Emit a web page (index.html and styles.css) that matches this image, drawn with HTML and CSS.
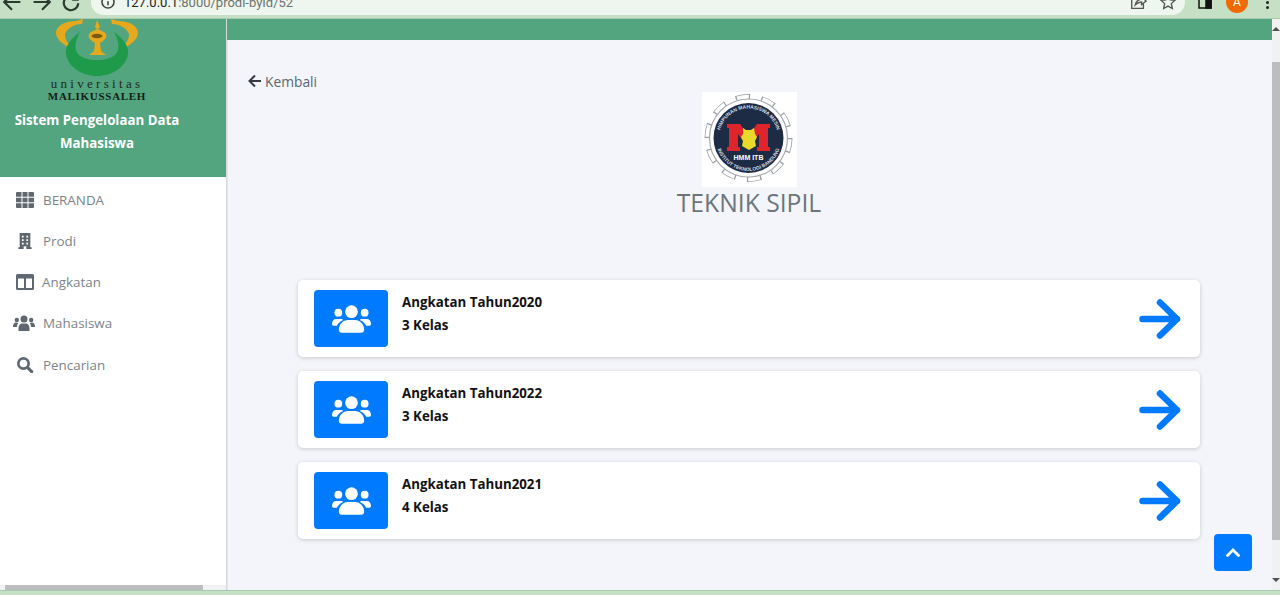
FILE: index.html
```html
<!DOCTYPE html>
<html lang="en">
<head>
    <meta charset="UTF-8">
    <meta name="viewport" content="width=device-width, initial-scale=1.0">
    <title>Sistem Pengelolaan Data Mahasiswa</title>
    <link rel="stylesheet" href="styles.css">
</head>
<body>
    <div class="browser-bar">
        <div class="browser-nav">
            <svg class="browser-icon" viewBox="0 0 20 20"><path d="M17 10H4M10 3.500L3.500 10l6.500 6.500"/></svg>
            <svg class="browser-icon" viewBox="0 0 20 20"><path d="M3 10h13M10 3.500l6.500 6.500-6.500 6.500"/></svg>
            <svg class="browser-icon" viewBox="0 0 20 20"><path d="M15 7.500A6 6 0 1 0 16 11M15.500 3.500V8H11"/></svg>
        </div>
        <div class="address-bar">
            <svg class="info-icon" viewBox="0 0 20 20"><circle cx="10" cy="10" r="7.500"/><path d="M10 9v5M10 6v1.500"/></svg>
            <span class="url"><span class="url-host">127.0.0.1</span>:8000/prodi-byId/52</span>
            <svg class="address-icon" viewBox="0 0 20 20"><path d="M9 4H3v13h13v-5M7 13c1-4 4-6 7-6V4l5 5-5 4v-3c-3 0-5 1-7 3z"/></svg>
            <svg class="address-icon" viewBox="0 0 20 20"><path d="M10 2.500l2.300 5 5.400.6-4 3.700 1.100 5.400-4.800-2.700-4.800 2.700 1.100-5.400-4-3.700 5.400-.6z"/></svg>
        </div>
        <div class="browser-actions">
            <svg class="panel-icon" viewBox="0 0 14 14"><path d="M1 1h12v12H1z"/><path class="panel-fill" d="M8 1h5v12H8z"/></svg>
            <span class="avatar">A</span>
            <span class="kebab"><i></i><i></i><i></i></span>
        </div>
    </div>

    <div class="app">
        <aside class="sidebar">
            <div class="brand">
                <svg class="emblem" viewBox="0 0 82 58">
                    <path class="emblem-gold" d="M27 0l-1 5C20 5 12 8 9 15c0 5 2 9 6 11l-3 2C5 24 0 19 0 14 0 7 8 2 20 2z"/>
                    <path class="emblem-gold" transform="matrix(-1 0 0 1 82 0)" d="M27 0l-1 5C20 5 12 8 9 15c0 5 2 9 6 11l-3 2C5 24 0 19 0 14 0 7 8 2 20 2z"/>
                    <path class="emblem-green" d="M24 13C14 20 9 28 10 35c2 13 16 22 31 22s29-9 31-22c1-7-4-15-14-22 5 9 6 17 2 22-4 4-11 6-19 6s-15-2-19-6c-4-5-3-13 2-22z"/>
                    <path class="emblem-gold" d="M41 1l3 7-2 2 6 3c3 2 3 5 1 7-2 2-3 3-5 4l1 8 5 4H33l5-4 1-8c-2-1-3-2-5-4-2-2-2-5 1-7l6-3-2-2z"/>
                    <ellipse class="emblem-dark" cx="41" cy="17" rx="5.500" ry="2.200"/>
                </svg>
                <div class="uni-name">universitas</div>
                <div class="uni-place">MALIKUSSALEH</div>
                <div class="app-name">Sistem Pengelolaan Data Mahasiswa</div>
            </div>
            <nav class="menu">
                <a class="menu-item">
                    <svg class="menu-icon" viewBox="0 0 18 16"><path d="M0 1a1 1 0 0 1 1-1h4.500v4.800H0zM6.500 0h5v4.800h-5zM12.500 0H17a1 1 0 0 1 1 1v3.800h-5.500zM0 5.700h5.500v4.600H0zM6.500 5.700h5v4.600h-5zM12.500 5.700H18v4.600h-5.500zM0 11.200h5.500V16H1a1 1 0 0 1-1-1zM6.500 11.200h5V16h-5zM12.500 11.200H18V15a1 1 0 0 1-1 1h-4.500z"/></svg>
                    BERANDA
                </a>
                <a class="menu-item">
                    <svg class="menu-icon" viewBox="0 0 18 18"><path fill-rule="evenodd" d="M3 0h12v16h1.500v2h-6v-3h-3v3h-6v-2H3zM5.500 3v2h2V3zm5 0v2h2V3zm-5 4v2h2V7zm5 0v2h2V7zm-5 4v2h2v-2zm5 0v2h2v-2z"/></svg>
                    Prodi
                </a>
                <a class="menu-item menu-item-tight">
                    <svg class="menu-icon" viewBox="0 0 18 16"><path fill-rule="evenodd" d="M1.500 0h15A1.500 1.500 0 0 1 18 1.500v13a1.500 1.500 0 0 1-1.500 1.500h-15A1.500 1.500 0 0 1 0 14.500v-13A1.500 1.500 0 0 1 1.500 0zM2 4.500V14h6V4.500zm8 0V14h6V4.500z"/></svg>
                    Angkatan
                </a>
                <a class="menu-item">
                    <svg class="menu-icon menu-icon-wide" viewBox="0 0 22 16"><circle cx="11" cy="4" r="3.500"/><circle cx="3.800" cy="5" r="2.200"/><circle cx="18.200" cy="5" r="2.200"/><path d="M5.500 16v-3c0-3 2-4.500 3.500-4.500h4c1.500 0 3.500 1.500 3.500 4.500v3zM0 12c0-3 1-4.500 3-4.500 1 0 1.700.3 2.300.8C4.400 9.200 4 10.500 4 12zM22 12c0-3-1-4.500-3-4.500-1 0-1.700.3-2.300.8.900.9 1.300 2.200 1.300 3.700z"/></svg>
                    Mahasiswa
                </a>
                <a class="menu-item">
                    <svg class="menu-icon" viewBox="0 0 18 18"><circle class="search-ring" cx="7.300" cy="7.300" r="5.800"/><path class="search-line" d="M12 12l4.500 4.500"/></svg>
                    Pencarian
                </a>
            </nav>
            <div class="sidebar-scroll"><span class="sidebar-thumb"></span></div>
        </aside>

        <main class="main">
            <div class="topbar"></div>
            <div class="content">
                <a class="back-link">
                    <svg class="back-icon" viewBox="0 0 14 14"><path d="M13 7H2M7 1.500L1.500 7 7 12.500"/></svg>
                    Kembali
                </a>
                <div class="prodi-head">
                    <svg class="prodi-logo" viewBox="0 0 95 95">
                        <rect width="95" height="95" fill="#fff"/>
                        <circle class="gear-teeth" cx="46.500" cy="46" r="41" pathLength="160"/>
                        <circle class="gear-inner" cx="46.500" cy="46" r="41.200" pathLength="160"/>
                        <circle class="gear-ring" cx="46.500" cy="46" r="39"/>
                        <circle class="seal" cx="46.500" cy="46" r="35"/>
                        <defs>
                            <path id="sealTop" d="M17 46a29.500 29.500 0 0 1 59 0"/>
                            <path id="sealBottom" d="M13.500 46a33 33 0 0 0 66 0"/>
                        </defs>
                        <text class="seal-text"><textPath href="#sealTop" startOffset="50%" text-anchor="middle">HIMPUNAN MAHASISWA MESIN</textPath></text>
                        <text class="seal-text"><textPath href="#sealBottom" startOffset="50%" text-anchor="middle">INSTITUT TEKNOLOGI BANDUNG</textPath></text>
                        <path class="seal-red" d="M25 32h13l8.500 12L55 32h13v4h-2v19h2v4H55v-4h2V42l-10.500 15L36 42v13h2v4H25v-4h2V36h-2z"/>
                        <path class="seal-gold" d="M41 36l3 2h5l3-2 1 6 2 3-2 4 1 5-7 4-7-4 1-5-2-4 2-3z"/>
                        <text class="seal-label" x="46.500" y="68" text-anchor="middle">HMM ITB</text>
                    </svg>
                    <h2 class="prodi-name">TEKNIK SIPIL</h2>
                </div>

                <div class="card-list">
                    <div class="year-card">
                        <div class="year-icon"><svg class="group-icon" viewBox="0 0 40 28"><use href="#groupShape"/></svg></div>
                        <div class="year-text">
                            <div>Angkatan Tahun2020</div>
                            <div>3 Kelas</div>
                        </div>
                        <svg class="go-icon" viewBox="0 0 42 40"><use href="#goShape"/></svg>
                    </div>
                    <div class="year-card">
                        <div class="year-icon"><svg class="group-icon" viewBox="0 0 40 28"><use href="#groupShape"/></svg></div>
                        <div class="year-text">
                            <div>Angkatan Tahun2022</div>
                            <div>3 Kelas</div>
                        </div>
                        <svg class="go-icon" viewBox="0 0 42 40"><use href="#goShape"/></svg>
                    </div>
                    <div class="year-card">
                        <div class="year-icon"><svg class="group-icon" viewBox="0 0 40 28"><use href="#groupShape"/></svg></div>
                        <div class="year-text">
                            <div>Angkatan Tahun2021</div>
                            <div>4 Kelas</div>
                        </div>
                        <svg class="go-icon" viewBox="0 0 42 40"><use href="#goShape"/></svg>
                    </div>
                </div>
            </div>
            <a class="to-top">
                <svg class="to-top-icon" viewBox="0 0 14 9"><path d="M1.500 7.500L7 2l5.500 5.500"/></svg>
            </a>
        </main>

        <div class="page-scroll">
            <span class="scroll-up"></span>
            <span class="page-thumb"></span>
            <span class="scroll-down"></span>
        </div>
    </div>
    <div class="bottom-strip"></div>

    <svg class="defs-only" aria-hidden="true">
        <defs>
            <g id="groupShape">
                <circle cx="20" cy="6.500" r="6.500"/>
                <circle cx="6.500" cy="7.500" r="4"/>
                <circle cx="33.500" cy="7.500" r="4"/>
                <path d="M7 25c0-6 5-10 9-10h8c4 0 9 4 9 10 0 2-1.500 3-3 3H10c-1.500 0-3-1-3-3z"/>
                <path d="M0 19c0-3 2-5 4-5h5c1 0 2 .3 2.500 1-3 1.500-5.500 3-6.500 6H2c-1 0-2-1-2-2zM40 19c0-3-2-5-4-5h-5c-1 0-2 .3-2.500 1 3 1.500 5.500 3 6.500 6h3c1 0 2-1 2-2z"/>
            </g>
            <path id="goShape" d="M3.500 20h34.500M21 3.500L38 20 21 36.500"/>
        </defs>
    </svg>
</body>
</html>
```
FILE: styles.css
```css
* {
    box-sizing: border-box;
}
html, body {
    height: 100%;
}
body {
    margin: 0;
    display: flex;
    flex-direction: column;
    overflow: hidden;
    font-family: "Open Sans", "Noto Sans", sans-serif;
    background-color: #f4f5fa;
}

/* browser window */
.browser-bar {
    flex: 0 0 19px;
    display: flex;
    align-items: flex-end;
    background-color: #c6e0c6;
    overflow: hidden;
    box-shadow: inset 0 -1px 0 #a9c9ae;
}
.browser-nav {
    width: 91px;
    flex: none;
    display: flex;
    gap: 5.500px;
    padding-bottom: 5px;
}
.browser-icon {
    width: 24px;
    height: 24px;
    flex: none;
    fill: none;
    stroke: #2c3a30;
    stroke-width: 1.800;
}
.address-bar {
    width: 1094px;
    flex: none;
    height: 26px;
    margin-bottom: 4px;
    display: flex;
    align-items: center;
    gap: 8px;
    padding: 0 8px 0 9px;
    background-color: #eff6ef;
    border-radius: 13px;
}
.info-icon {
    width: 16px;
    height: 16px;
    fill: none;
    stroke: #444;
    stroke-width: 2;
    flex: none;
}
.url {
    flex: 1;
    font-family: "Roboto", sans-serif;
    font-size: 13px;
    color: #6a736c;
}
.url-host {
    color: #222;
}
.address-icon {
    width: 18px;
    height: 18px;
    fill: none;
    stroke: #555;
    stroke-width: 1.500;
    margin-left: 4px;
}
.browser-actions {
    flex: 1;
    display: flex;
    align-items: center;
    gap: 14px;
    padding-left: 13px;
    height: 26px;
    margin-bottom: 4px;
}
.panel-icon {
    width: 14px;
    height: 14px;
    fill: none;
    stroke: #111;
    stroke-width: 1.500;
}
.panel-fill {
    fill: #111;
}
.avatar {
    width: 22px;
    height: 22px;
    flex: none;
    border-radius: 50%;
    background-color: #f06a00;
    color: #fff;
    font-family: "Roboto", sans-serif;
    font-size: 12px;
    line-height: 22px;
    text-align: center;
}
.kebab {
    display: flex;
    flex-direction: column;
    gap: 2px;
    margin-left: 4px;
}
.kebab i {
    display: block;
    width: 3px;
    height: 3px;
    border-radius: 50%;
    background-color: #222;
}

/* page frame */
.app {
    flex: 1;
    min-height: 0;
    display: flex;
}
.bottom-strip {
    flex: 0 0 5px;
    background-color: #c6e0c6;
    border-top: 1px solid #a9c9ae;
}

/* sidebar */
.sidebar {
    flex: 0 0 227px;
    position: relative;
    display: flex;
    flex-direction: column;
    background-color: #fff;
    border-right: 1px solid #d9d9dd;
    box-shadow: 1px 0 0 #e6e6ea;
}
.brand {
    height: 158px;
    flex: none;
    display: flex;
    flex-direction: column;
    align-items: center;
    padding-right: 32px;
    background-color: #53a57f;
    overflow: hidden;
}
.emblem {
    width: 82px;
    height: 58px;
    flex: none;
    display: block;
}
.emblem-gold {
    fill: #e6a81c;
}
.emblem-green {
    fill: #1f9a4a;
}
.emblem-dark {
    fill: #7a5a10;
}
.uni-name {
    font-family: "Liberation Serif", serif;
    font-size: 13px;
    line-height: 13px;
    letter-spacing: 3.300px;
    color: #1e2a22;
}
.uni-place {
    font-family: "Liberation Serif", serif;
    font-weight: bold;
    font-size: 11px;
    line-height: 12px;
    letter-spacing: .7px;
    color: #14201a;
}
.app-name {
    width: 190px;
    margin-top: 7px;
    font-weight: bold;
    font-size: 13.300px;
    line-height: 23px;
    text-align: center;
    color: #fff;
}
.menu {
    flex: 1;
    padding-top: 2px;
}
.menu-item {
    height: 41.250px;
    display: flex;
    align-items: center;
    gap: 9px;
    padding-left: 16px;
    font-size: 13.400px;
    color: #7b848c;
}
.menu-item-tight {
    gap: 8px;
}
.menu-icon {
    width: 18px;
    height: 16px;
    flex: none;
    fill: #5f6870;
}
.menu-icon-wide {
    width: 22px;
    margin-left: -3px;
    margin-right: -1px;
}
.search-ring {
    fill: none;
    stroke: #5f6870;
    stroke-width: 3;
}
.search-line {
    fill: none;
    stroke: #5f6870;
    stroke-width: 3.500;
    stroke-linecap: round;
}
.sidebar-scroll {
    height: 5px;
    flex: none;
    padding-left: 5px;
    background-color: #f1f1f1;
}
.sidebar-thumb {
    display: block;
    width: 198px;
    height: 5px;
    background-color: #bdbdbd;
}

/* main column */
.main {
    flex: 1;
    min-width: 0;
    position: relative;
    display: flex;
    flex-direction: column;
}
.topbar {
    height: 21px;
    flex: none;
    background-color: #53a57f;
}
.content {
    flex: 1;
    padding: 31px 22px 0 21px;
}
.back-link {
    display: flex;
    align-items: center;
    gap: 3px;
    height: 20px;
    font-size: 13.800px;
    color: #5c656d;
}
.back-icon {
    width: 14px;
    height: 14px;
    fill: none;
    stroke: #343a40;
    stroke-width: 2;
}
.prodi-head {
    margin-top: 1px;
    display: flex;
    flex-direction: column;
    align-items: center;
}
.prodi-logo {
    width: 95px;
    height: 95px;
    display: block;
}
.gear-teeth {
    fill: none;
    stroke: #9a9fa6;
    stroke-width: 6;
    stroke-dasharray: 9 7;
}
.gear-inner {
    fill: none;
    stroke: #fff;
    stroke-width: 4;
    stroke-dasharray: 7.400 8.600;
    stroke-dashoffset: -.8;
}
.gear-ring {
    fill: #fff;
    stroke: #a8acb2;
    stroke-width: 1.200;
}
.seal {
    fill: #1d2b45;
}
.seal-text {
    font-family: "Liberation Sans", sans-serif;
    font-size: 5px;
    font-weight: bold;
    fill: #d5dae3;
}
.seal-red {
    fill: #e0242c;
}
.seal-gold {
    fill: #e9d92a;
}
.seal-label {
    font-family: "Liberation Sans", sans-serif;
    font-size: 7px;
    font-weight: bold;
    fill: #fff;
}
.prodi-name {
    margin: 0;
    font-weight: normal;
    font-size: 24.700px;
    line-height: 32px;
    color: #6c757d;
}
.card-list {
    width: 902px;
    margin: 61px auto 0;
    display: flex;
    flex-direction: column;
    gap: 14px;
}
.year-card {
    height: 77px;
    display: flex;
    align-items: center;
    padding: 0 19px 0 16px;
    background-color: #fff;
    border-radius: 5px;
    box-shadow: 0 1px 4px rgba(0, 0, 0, 0.18);
}
.year-icon {
    width: 74px;
    height: 57px;
    flex: none;
    display: flex;
    align-items: center;
    justify-content: center;
    background-color: #007bff;
    border-radius: 4px;
}
.group-icon {
    width: 39px;
    height: 28px;
    fill: #fff;
}
.year-text {
    flex: 1;
    padding: 0 0 9px 14px;
    font-weight: bold;
    font-size: 13.300px;
    line-height: 23px;
    color: #111;
}
.go-icon {
    width: 42px;
    height: 40px;
    fill: none;
    stroke: #007bff;
    stroke-width: 6.500;
    stroke-linecap: round;
    stroke-linejoin: round;
}
.to-top {
    position: absolute;
    right: 20px;
    bottom: 19px;
    width: 38px;
    height: 37px;
    display: flex;
    align-items: center;
    justify-content: center;
    background-color: #007bff;
    border-radius: 4px;
}
.to-top-icon {
    width: 14px;
    height: 9px;
    fill: none;
    stroke: #fff;
    stroke-width: 2.800;
    stroke-linecap: round;
}

/* page scrollbar */
.page-scroll {
    flex: 0 0 8px;
    display: flex;
    flex-direction: column;
    align-items: center;
    background-color: #f1f1f1;
}
.scroll-up {
    margin-top: 8px;
    border-left: 4px solid transparent;
    border-right: 4px solid transparent;
    border-bottom: 4px solid #505050;
}
.page-thumb {
    width: 8px;
    height: 478px;
    margin-top: 31px;
    background-color: #bdbdbd;
}
.scroll-down {
    margin-top: 38px;
    border-left: 4px solid transparent;
    border-right: 4px solid transparent;
    border-top: 4px solid #505050;
}
.defs-only {
    position: absolute;
    width: 0;
    height: 0;
}
```
